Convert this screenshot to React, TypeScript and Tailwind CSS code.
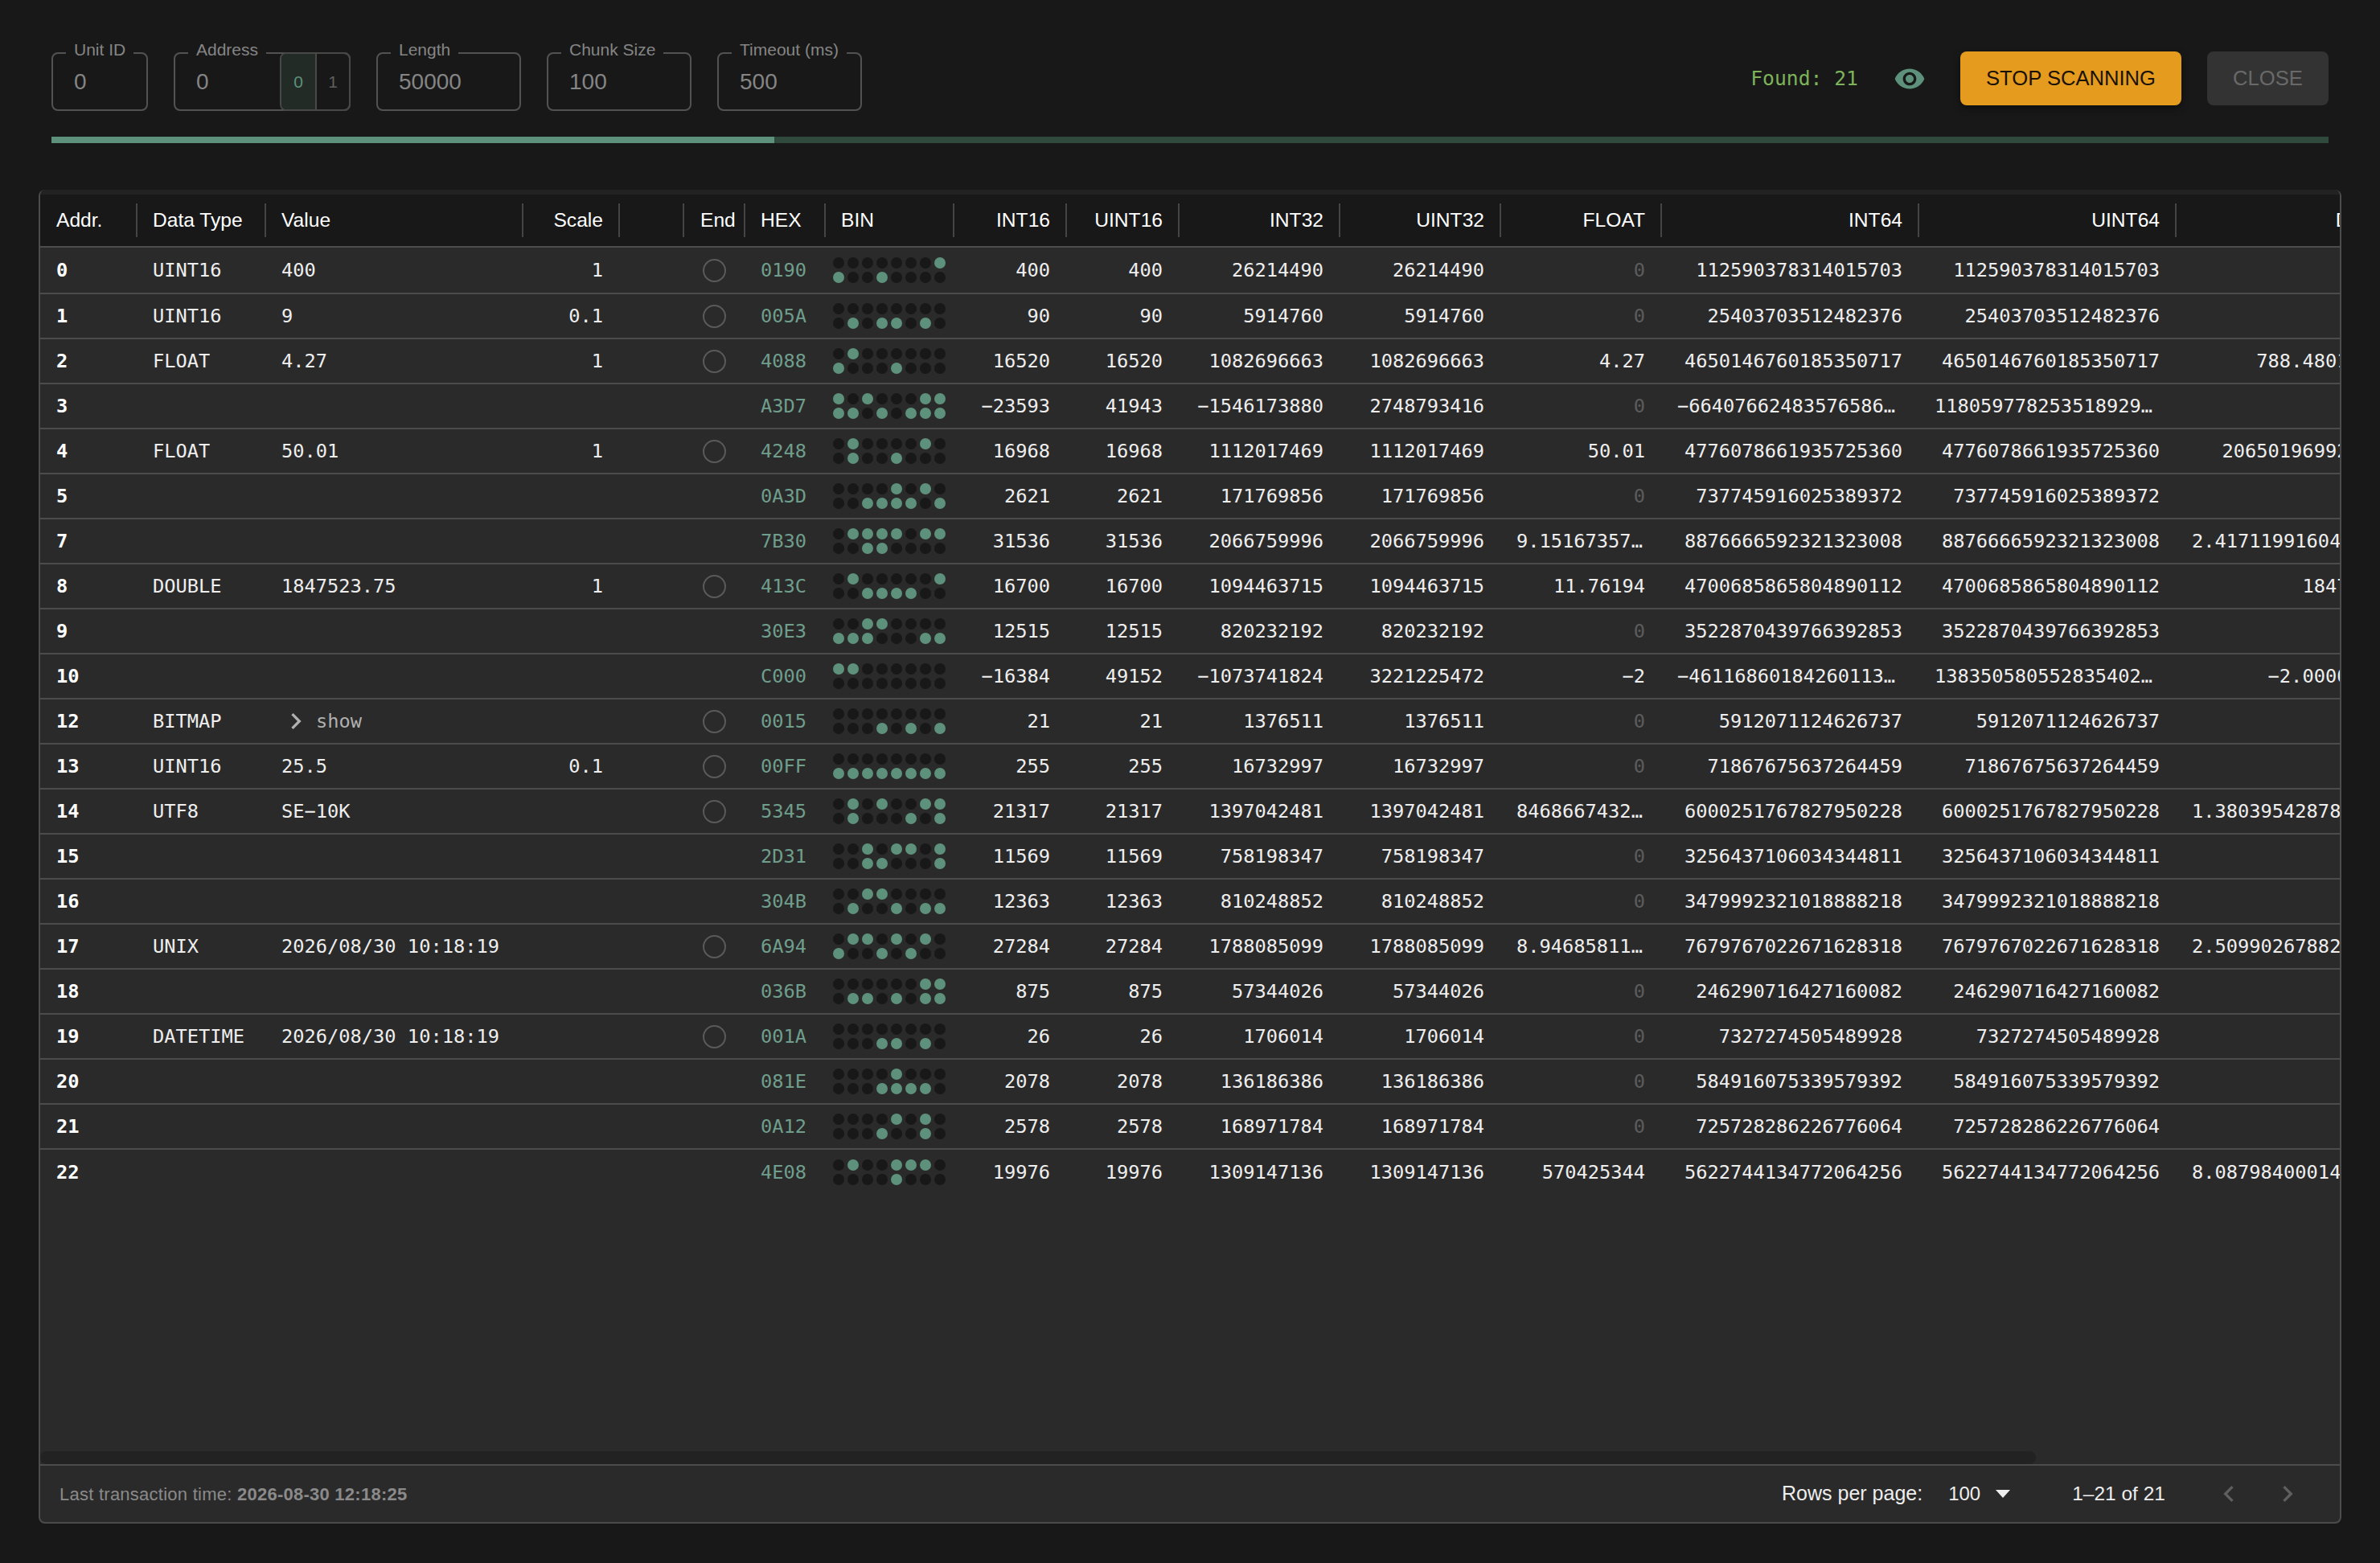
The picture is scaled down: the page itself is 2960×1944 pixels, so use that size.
const mono = "font-['DejaVu_Sans_Mono',monospace]"

const COLS = [
  { key: 'addr', label: 'Addr.', cls: 'w-[120px]' },
  { key: 'type', label: 'Data Type', cls: 'w-[160px]' },
  { key: 'value', label: 'Value', cls: 'w-[320px]' },
  { key: 'scale', label: 'Scale', cls: 'w-[120px] justify-end' },
  { key: 'blank', label: '', cls: 'w-[80px]' },
  { key: 'end', label: 'End', cls: 'w-[76px]' },
  { key: 'hex', label: 'HEX', cls: 'w-[100px]' },
  { key: 'bin', label: 'BIN', cls: 'w-[160px]' },
  { key: 'int16', label: 'INT16', cls: 'w-[140px] justify-end' },
  { key: 'uint16', label: 'UINT16', cls: 'w-[140px] justify-end' },
  { key: 'int32', label: 'INT32', cls: 'w-[200px] justify-end' },
  { key: 'uint32', label: 'UINT32', cls: 'w-[200px] justify-end' },
  { key: 'float', label: 'FLOAT', cls: 'w-[200px] justify-end' },
  { key: 'int64', label: 'INT64', cls: 'w-[320px] justify-end' },
  { key: 'uint64', label: 'UINT64', cls: 'w-[320px] justify-end' },
  { key: 'double', label: 'DOUBLE', cls: 'w-[320px] justify-end' },
]

type Row = {
  addr: number
  type?: string
  value?: string
  scale?: string
  hex: string
  int16: string
  uint16: string
  int32: string
  uint32: string
  float: string
  int64: string
  uint64?: string
  double?: string
}

const ROWS: Row[] = [
  { addr: 0, type: 'UINT16', value: '400', scale: '1', hex: '0190', int16: '400', uint16: '400', int32: '26214490', uint32: '26214490', float: '0', int64: '112590378314015703' },
  { addr: 1, type: 'UINT16', value: '9', scale: '0.1', hex: '005A', int16: '90', uint16: '90', int32: '5914760', uint32: '5914760', float: '0', int64: '25403703512482376' },
  { addr: 2, type: 'FLOAT', value: '4.27', scale: '1', hex: '4088', int16: '16520', uint16: '16520', int32: '1082696663', uint32: '1082696663', float: '4.27', int64: '4650146760185350717', double: '788.4801100000' },
  { addr: 3, hex: 'A3D7', int16: '−23593', uint16: '41943', int32: '−1546173880', uint32: '2748793416', float: '0', int64: '−6640766248357658600', uint64: '11805977825351892900' },
  { addr: 4, type: 'FLOAT', value: '50.01', scale: '1', hex: '4248', int16: '16968', uint16: '16968', int32: '1112017469', uint32: '1112017469', float: '50.01', int64: '4776078661935725360', double: '20650196992000000' },
  { addr: 5, hex: '0A3D', int16: '2621', uint16: '2621', int32: '171769856', uint32: '171769856', float: '0', int64: '737745916025389372' },
  { addr: 7, hex: '7B30', int16: '31536', uint16: '31536', int32: '2066759996', uint32: '2066759996', float: '9.1516735700e+36', int64: '8876666592321323008', double: '2.41711991604000000e+284' },
  { addr: 8, type: 'DOUBLE', value: '1847523.75', scale: '1', hex: '413C', int16: '16700', uint16: '16700', int32: '1094463715', uint32: '1094463715', float: '11.76194', int64: '4700685865804890112', double: '1847523.75' },
  { addr: 9, hex: '30E3', int16: '12515', uint16: '12515', int32: '820232192', uint32: '820232192', float: '0', int64: '3522870439766392853' },
  { addr: 10, hex: 'C000', int16: '−16384', uint16: '49152', int32: '−1073741824', uint32: '3221225472', float: '−2', int64: '−4611686018426011300', uint64: '13835058055283540200', double: '−2.0000000000' },
  { addr: 12, type: 'BITMAP', value: 'show', hex: '0015', int16: '21', uint16: '21', int32: '1376511', uint32: '1376511', float: '0', int64: '5912071124626737' },
  { addr: 13, type: 'UINT16', value: '25.5', scale: '0.1', hex: '00FF', int16: '255', uint16: '255', int32: '16732997', uint32: '16732997', float: '0', int64: '71867675637264459' },
  { addr: 14, type: 'UTF8', value: 'SE−10K', hex: '5345', int16: '21317', uint16: '21317', int32: '1397042481', uint32: '1397042481', float: '8468667432000', int64: '6000251767827950228', double: '1.38039542878000000e+93' },
  { addr: 15, hex: '2D31', int16: '11569', uint16: '11569', int32: '758198347', uint32: '758198347', float: '0', int64: '3256437106034344811' },
  { addr: 16, hex: '304B', int16: '12363', uint16: '12363', int32: '810248852', uint32: '810248852', float: '0', int64: '3479992321018888218' },
  { addr: 17, type: 'UNIX', value: '2026/08/30 10:18:19', hex: '6A94', int16: '27284', uint16: '27284', int32: '1788085099', uint32: '1788085099', float: '8.9468581100e+25', int64: '7679767022671628318', double: '2.50990267882000000e+204' },
  { addr: 18, hex: '036B', int16: '875', uint16: '875', int32: '57344026', uint32: '57344026', float: '0', int64: '246290716427160082' },
  { addr: 19, type: 'DATETIME', value: '2026/08/30 10:18:19', hex: '001A', int16: '26', uint16: '26', int32: '1706014', uint32: '1706014', float: '0', int64: '7327274505489928' },
  { addr: 20, hex: '081E', int16: '2078', uint16: '2078', int32: '136186386', uint32: '136186386', float: '0', int64: '584916075339579392' },
  { addr: 21, hex: '0A12', int16: '2578', uint16: '2578', int32: '168971784', uint32: '168971784', float: '0', int64: '725728286226776064' },
  { addr: 22, hex: '4E08', int16: '19976', uint16: '19976', int32: '1309147136', uint32: '1309147136', float: '570425344', int64: '5622744134772064256', double: '8.08798400014000000e+69' },
]

function Chevron({ dir, className }: { dir: 'left' | 'right'; className: string }) {
  return (
    <svg viewBox="0 0 24 24" fill="currentColor" className={className}>
      <path d={dir === 'left' ? 'M15.41 16.59L10.83 12l4.58-4.59L14 6l-6 6 6 6 1.41-1.41z' : 'M8.59 16.59L13.17 12 8.59 7.41 10 6l6 6-6 6-1.41-1.41z'} />
    </svg>
  )
}

function Field({ label, value, className, children }: { label: string; value: string; className: string; children?: React.ReactNode }) {
  return (
    <div className={`relative flex h-[73px] items-center rounded-[8px] border-2 border-[#525252] pl-[26px] ${className}`}>
      <span className="absolute left-[16px] top-[-17px] bg-[#181818] px-[10px] text-[21px] leading-[24px] text-[#858585]">{label}</span>
      <span className="text-[28px] text-[#858585]">{value}</span>
      {children}
    </div>
  )
}

function Dots({ hex }: { hex: string }) {
  const bits = parseInt(hex, 16).toString(2).padStart(16, '0').split('')
  return (
    <div className="ml-[-10px] grid w-[140px] shrink-0 grid-cols-8 gap-[4px]">
      {bits.map((b, i) => (
        <span key={i} className={`h-[14px] w-[14px] rounded-full ${b === '1' ? 'bg-[#5d917b]' : 'bg-[#181818]'}`} />
      ))}
    </div>
  )
}

function Cell({ col, row }: { col: (typeof COLS)[number]; row: Row }) {
  const base = `flex h-full shrink-0 items-center px-[20px] ${col.cls}`
  if (col.key === 'bin') {
    return (
      <div className={base}>
        <Dots hex={row.hex} />
      </div>
    )
  }
  if (col.key === 'end') {
    return <div className={`${base} justify-center`}>{row.type && <span className="h-[29px] w-[29px] shrink-0 rounded-full border-[2.5px] border-[#5a5a5a]" />}</div>
  }
  if (col.key === 'value' && row.type === 'BITMAP') {
    return (
      <div className={`${base} text-[#b0b0b0]`}>
        <Chevron dir="right" className="ml-[-2px] h-[40px] w-[40px] shrink-0" />
        <span className="ml-[5px] pt-px">show</span>
      </div>
    )
  }
  let text = (row as unknown as Record<string, string | number | undefined>)[col.key]
  if (col.key === 'uint64' && text === undefined) text = row.int64
  let color = 'text-[#eeeeee]'
  if (col.key === 'addr') color = 'font-bold text-white'
  if (col.key === 'hex') color = 'text-[#6f9e8c]'
  if (col.key === 'float' && text === '0') color = 'text-[#5c5c5c]'
  return (
    <div className={`${base} ${color}`}>
      <span className="min-w-0 truncate pt-px">{text}</span>
    </div>
  )
}

export default function App() {
  return (
    <div className="flex h-[1944px] w-[2960px] flex-col overflow-hidden bg-[#181818] font-['Liberation_Sans',sans-serif]">
      <div className="flex items-start px-[64px] pt-[64px]">
        <div className="mt-px flex gap-[32px]">
          <Field label="Unit ID" value="0" className="w-[120px]" />
          <Field label="Address" value="0" className="w-[220px]">
            <div className="absolute bottom-[-2px] right-[-2px] top-[-2px] flex w-[88px] overflow-hidden rounded-[8px] border-2 border-[#484848] text-[21px]">
              <span className="flex w-[44px] items-center justify-center border-r-2 border-[#484848] bg-[#232b26] text-[#5d917b]">0</span>
              <span className="flex flex-1 items-center justify-center text-[#5f5f5f]">1</span>
            </div>
          </Field>
          <Field label="Length" value="50000" className="w-[180px]" />
          <Field label="Chunk Size" value="100" className="w-[180px]" />
          <Field label="Timeout (ms)" value="500" className="w-[180px]" />
        </div>
        <div className="ml-auto flex h-[67px] items-center">
          <span className={`${mono} text-[24.7px] text-[#7db35a] whitespace-pre`}>Found: 21</span>
          <svg viewBox="0 0 24 24" fill="#5d917b" className="ml-[44px] h-[40px] w-[40px]">
            <path d="M12 4.5C7 4.5 2.73 7.61 1 12c1.73 4.39 6 7.5 11 7.5s9.27-3.11 11-7.5c-1.73-4.39-6-7.5-11-7.5zM12 17c-2.76 0-5-2.24-5-5s2.24-5 5-5 5 2.24 5 5-2.24 5-5 5zm0-8c-1.66 0-3 1.34-3 3s1.34 3 3 3 3-1.34 3-3-1.34-3-3-3z" />
          </svg>
          <button className="ml-[43px] flex h-[67px] w-[275px] items-center justify-center rounded-[8px] bg-[#e59b1e] text-[25.6px] text-[#1a1206] shadow-[0_4px_10px_rgba(0,0,0,0.4)]">STOP SCANNING</button>
          <button className="ml-[32px] flex h-[67px] w-[151px] items-center justify-center rounded-[8px] bg-[#333333] text-[25.6px] text-[#696969]">CLOSE</button>
        </div>
      </div>

      <div className="mx-[64px] mt-[32px] h-[8px] shrink-0 bg-[#2f4a3c]">
        <div className="h-full w-[899px] bg-[#5d917b]" />
      </div>

      <div className="mx-[48px] mb-[49px] mt-[58px] flex min-h-0 flex-1 flex-col overflow-hidden rounded-[8px] border-x-2 border-b-2 border-[#4c4c4c] bg-[#2a2a2a]">
        <div className="h-[6px] shrink-0 bg-[#222222]" />
        <div className="relative min-h-0 flex-1 overflow-hidden">
          <div className="flex h-[66px] w-[2976px] items-center border-b-2 border-[#4c4c4c] bg-[#181818] text-[24.6px] text-white">
            {COLS.map((col, i) => (
              <div key={col.key} className={`relative flex h-full shrink-0 items-center ${col.key === 'end' ? 'pl-[21px]' : 'px-[20px]'} ${col.cls}`}>
                <span className="whitespace-nowrap pt-px">{col.label}</span>
                {i < COLS.length - 1 && <span className="absolute right-[-1px] top-[11px] h-[42px] w-[2px] bg-[#444444]" />}
              </div>
            ))}
          </div>
          <div className={`${mono} w-[2976px] text-[23.7px]`}>
            {ROWS.map((row, i) => (
              <div key={row.addr} className={`flex ${i === ROWS.length - 1 ? '' : 'border-b-2 border-[#4c4c4c]'} ${i === 0 ? 'h-[58px]' : 'h-[56px]'}`}>
                {COLS.map(col => (
                  <Cell key={col.key} col={col} row={row} />
                ))}
              </div>
            ))}
          </div>
          <div className="absolute bottom-0 left-0 h-[16px] w-[2482px] rounded-[8px] bg-[#222222]" />
        </div>
        <div className="flex h-[72px] shrink-0 items-center border-t-2 border-[#4c4c4c] pl-[24px] pr-[45px] text-[24.5px] text-[#eeeeee]">
          <span className="text-[22px] tracking-[0.25px] text-[#8a8a8a]">
            Last transaction time: <b>2026-08-30 12:18:25</b>
          </span>
          <span className="ml-auto text-[25px]">Rows per page:</span>
          <span className="ml-[32px] text-[24px]">100</span>
          <svg viewBox="0 0 18 10" fill="currentColor" className="ml-[19px] h-[10px] w-[18px]">
            <path d="M0 0h18L9 10z" />
          </svg>
          <span className="ml-[77px]">1–21 of 21</span>
          <Chevron dir="left" className="ml-[59px] h-[40px] w-[40px] text-[#5f5f5f]" />
          <Chevron dir="right" className="ml-[33px] h-[40px] w-[40px] text-[#5f5f5f]" />
        </div>
      </div>
    </div>
  )
}
